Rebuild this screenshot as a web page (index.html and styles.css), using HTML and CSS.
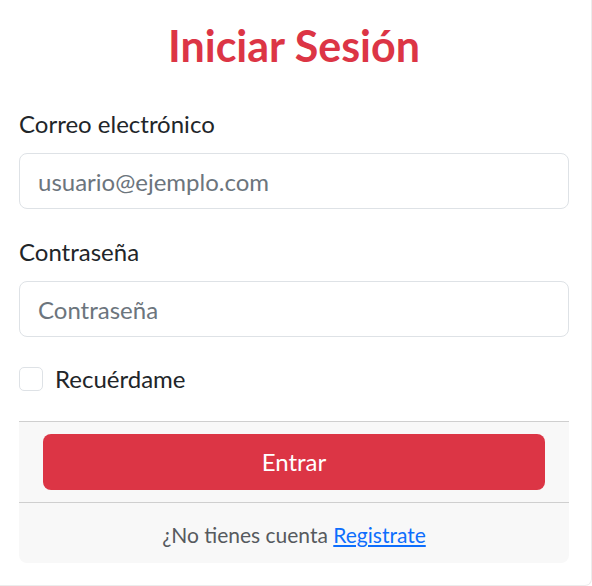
FILE: index.html
```html
<!DOCTYPE html>
<html lang="es">
<head>
<meta charset="utf-8">
<title>Iniciar Sesión</title>
<link rel="stylesheet" href="styles.css">
</head>
<body>
<div class="page">
  <h1 class="title">Iniciar Sesión</h1>
  <form class="form">
    <div class="field">
      <label class="label" for="email">Correo electrónico</label>
      <input class="input" id="email" type="email" placeholder="usuario@ejemplo.com">
    </div>
    <div class="field">
      <label class="label" for="pass">Contraseña</label>
      <input class="input" id="pass" type="password" placeholder="Contraseña">
    </div>
    <label class="check">
      <span class="box"></span>
      <span class="check-label">Recuérdame</span>
    </label>
    <div class="footer">
      <div class="footer-action">
        <button class="btn" type="button">Entrar</button>
      </div>
      <div class="footer-note">¿No tienes cuenta <a class="link" href="#">Registrate</a></div>
    </div>
  </form>
</div>
</body>
</html>
```
FILE: styles.css
```css
* { box-sizing: border-box; }
html, body { margin: 0; padding: 0; background: #fff; }
body { font-family: Lato, "Liberation Sans", sans-serif; color: #212529; }
.page {
  width: 592px;
  height: 586px;
  padding: 0 22px 0 19px;
  border-right: 1px solid #ececec;
  border-bottom: 1px solid #ececec;
  border-bottom-right-radius: 7px;
  overflow: hidden;
}
.title {
  margin: 0;
  padding-top: 20px;
  text-align: center;
  color: #dc3545;
  font-size: 43px;
  font-weight: 700;
  line-height: 52px;
}
.form { display: flex; flex-direction: column; }
.field { display: flex; flex-direction: column; }
.field + .field { margin-top: 28px; }
.label {
  font-size: 24px;
  line-height: 30px;
  margin-top: 37px;
  margin-bottom: 14px;
}
.field + .field .label { margin-top: 0; }
.input {
  height: 56px;
  border: 1px solid #dee2e6;
  border-radius: 8px;
  padding: 0 18px;
  font-family: inherit;
  font-size: 24px;
  color: #212529;
  background: #fff;
  outline: none;
}
.input::placeholder { color: #6c757d; opacity: 1; }
.check {
  display: flex;
  align-items: center;
  gap: 12px;
  margin-top: 27px;
  height: 30px;
}
.box {
  width: 24px;
  height: 24px;
  border: 1px solid #dee2e6;
  border-radius: 5px;
  background: #fff;
}
.check-label { font-size: 24px; line-height: 30px; }
.footer {
  margin-top: 27px;
  background: #f8f8f8;
  border-top: 1px solid #cfcfcf;
  border-radius: 0 0 8px 8px;
}
.footer-action { padding: 12px 24px; }
.btn {
  display: block;
  width: 100%;
  height: 56px;
  border: 0;
  border-radius: 8px;
  background: #dc3545;
  color: #fff;
  font-family: inherit;
  font-size: 24px;
  line-height: 30px;
}
.footer-note {
  border-top: 1px solid #cfcfcf;
  height: 61px;
  padding-top: 17px;
  text-align: center;
  font-size: 21px;
  line-height: 30px;
  color: #565a5e;
}
.link { color: #0d6efd; text-decoration: underline; }
```
